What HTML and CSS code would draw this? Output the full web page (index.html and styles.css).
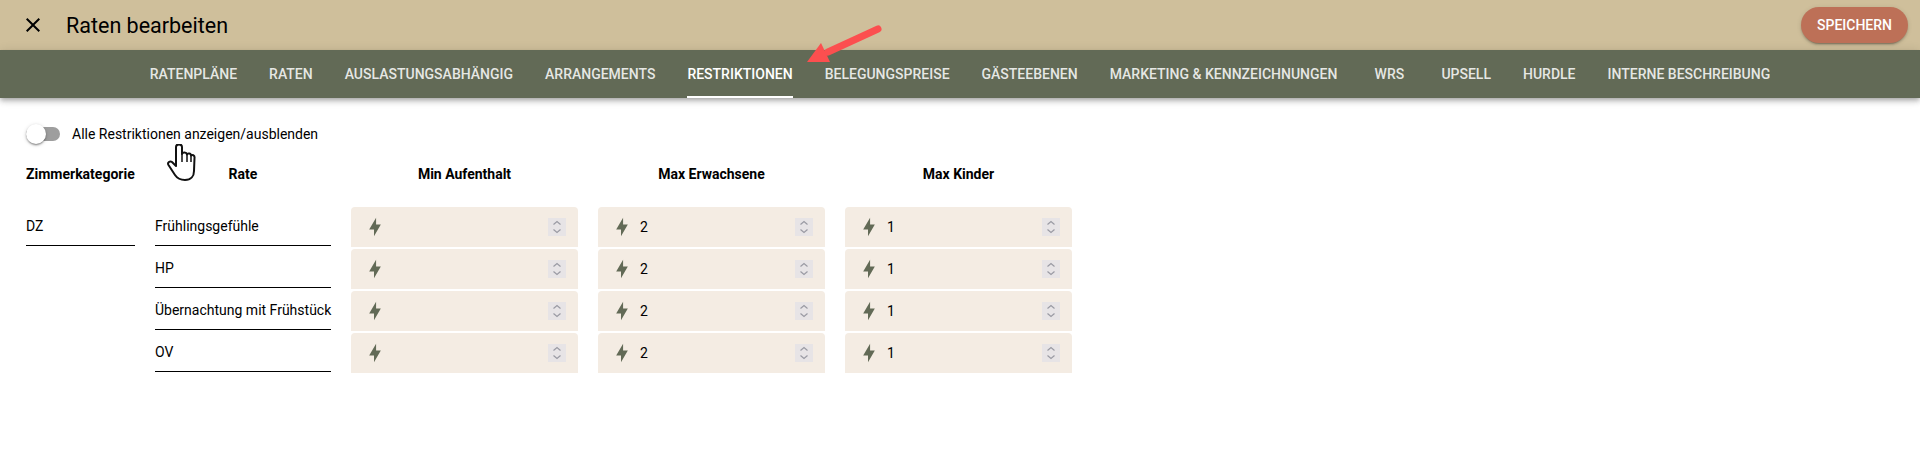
FILE: index.html
```html
<!DOCTYPE html>
<html lang="de">
<head>
<meta charset="utf-8">
<title>Raten bearbeiten</title>
<link rel="stylesheet" href="styles.css">
</head>
<body>
<header class="topbar">
  <svg class="close" viewBox="0 0 24 24"><path d="M19 6.41 17.59 5 12 10.59 6.41 5 5 6.41 10.59 12 5 17.59 6.41 19 12 13.41 17.59 19 19 17.59 13.41 12z"/></svg>
  <h1 class="title">Raten bearbeiten</h1>
  <button class="save">SPEICHERN</button>
</header>
<nav class="tabs">
  <a class="tab">Ratenpläne</a>
  <a class="tab">Raten</a>
  <a class="tab">Auslastungsabhängig</a>
  <a class="tab">Arrangements</a>
  <a class="tab active">Restriktionen</a>
  <a class="tab">Belegungspreise</a>
  <a class="tab">Gästeebenen</a>
  <a class="tab">Marketing &amp; Kennzeichnungen</a>
  <a class="tab">WRS</a>
  <a class="tab">Upsell</a>
  <a class="tab">Hurdle</a>
  <a class="tab">Interne Beschreibung</a>
</nav>
<main class="content">
  <div class="toggle-row">
    <span class="switch"><span class="knob"></span></span>
    <span class="toggle-label">Alle Restriktionen anzeigen/ausblenden</span>
  </div>
  <div class="grid">
    <div class="head head-left">Zimmerkategorie</div>
    <div class="head">Rate</div>
    <div class="head">Min Aufenthalt</div>
    <div class="head">Max Erwachsene</div>
    <div class="head">Max Kinder</div>

    <div class="name">DZ</div>
    <div class="name">Frühlingsgefühle</div>
    <div class="field"><svg class="bolt" viewBox="0 0 24 24"><path d="M10.800 15H5L13.300 1V9H19L10.800 23V15Z"/></svg><span class="val"></span><svg class="spin" viewBox="0 0 18 18"><path d="M5.5 6.5 9 3.5l3.500 3M5.500 11.500 9 14.500l3.500-3"/></svg></div>
    <div class="field"><svg class="bolt" viewBox="0 0 24 24"><path d="M10.800 15H5L13.300 1V9H19L10.800 23V15Z"/></svg><span class="val">2</span><svg class="spin" viewBox="0 0 18 18"><path d="M5.5 6.5 9 3.5l3.500 3M5.500 11.500 9 14.500l3.500-3"/></svg></div>
    <div class="field"><svg class="bolt" viewBox="0 0 24 24"><path d="M10.800 15H5L13.300 1V9H19L10.800 23V15Z"/></svg><span class="val">1</span><svg class="spin" viewBox="0 0 18 18"><path d="M5.5 6.5 9 3.5l3.500 3M5.500 11.500 9 14.500l3.500-3"/></svg></div>

    <div class="empty"></div>
    <div class="name">HP</div>
    <div class="field"><svg class="bolt" viewBox="0 0 24 24"><path d="M10.800 15H5L13.300 1V9H19L10.800 23V15Z"/></svg><span class="val"></span><svg class="spin" viewBox="0 0 18 18"><path d="M5.5 6.5 9 3.5l3.500 3M5.500 11.500 9 14.500l3.500-3"/></svg></div>
    <div class="field"><svg class="bolt" viewBox="0 0 24 24"><path d="M10.800 15H5L13.300 1V9H19L10.800 23V15Z"/></svg><span class="val">2</span><svg class="spin" viewBox="0 0 18 18"><path d="M5.5 6.5 9 3.5l3.500 3M5.500 11.500 9 14.500l3.500-3"/></svg></div>
    <div class="field"><svg class="bolt" viewBox="0 0 24 24"><path d="M10.800 15H5L13.300 1V9H19L10.800 23V15Z"/></svg><span class="val">1</span><svg class="spin" viewBox="0 0 18 18"><path d="M5.5 6.5 9 3.5l3.500 3M5.500 11.500 9 14.500l3.500-3"/></svg></div>

    <div class="empty"></div>
    <div class="name">Übernachtung mit Frühstück</div>
    <div class="field"><svg class="bolt" viewBox="0 0 24 24"><path d="M10.800 15H5L13.300 1V9H19L10.800 23V15Z"/></svg><span class="val"></span><svg class="spin" viewBox="0 0 18 18"><path d="M5.5 6.5 9 3.5l3.500 3M5.500 11.500 9 14.500l3.500-3"/></svg></div>
    <div class="field"><svg class="bolt" viewBox="0 0 24 24"><path d="M10.800 15H5L13.300 1V9H19L10.800 23V15Z"/></svg><span class="val">2</span><svg class="spin" viewBox="0 0 18 18"><path d="M5.5 6.5 9 3.5l3.500 3M5.500 11.500 9 14.500l3.500-3"/></svg></div>
    <div class="field"><svg class="bolt" viewBox="0 0 24 24"><path d="M10.800 15H5L13.300 1V9H19L10.800 23V15Z"/></svg><span class="val">1</span><svg class="spin" viewBox="0 0 18 18"><path d="M5.5 6.5 9 3.5l3.500 3M5.500 11.500 9 14.500l3.500-3"/></svg></div>

    <div class="empty"></div>
    <div class="name">OV</div>
    <div class="field"><svg class="bolt" viewBox="0 0 24 24"><path d="M10.800 15H5L13.300 1V9H19L10.800 23V15Z"/></svg><span class="val"></span><svg class="spin" viewBox="0 0 18 18"><path d="M5.5 6.5 9 3.5l3.500 3M5.500 11.500 9 14.500l3.500-3"/></svg></div>
    <div class="field"><svg class="bolt" viewBox="0 0 24 24"><path d="M10.800 15H5L13.300 1V9H19L10.800 23V15Z"/></svg><span class="val">2</span><svg class="spin" viewBox="0 0 18 18"><path d="M5.5 6.5 9 3.5l3.500 3M5.500 11.500 9 14.500l3.500-3"/></svg></div>
    <div class="field"><svg class="bolt" viewBox="0 0 24 24"><path d="M10.800 15H5L13.300 1V9H19L10.800 23V15Z"/></svg><span class="val">1</span><svg class="spin" viewBox="0 0 18 18"><path d="M5.5 6.5 9 3.5l3.500 3M5.500 11.500 9 14.500l3.500-3"/></svg></div>
  </div>
</main>
<svg class="arrow" viewBox="0 0 80 42"><path d="M72 5 22 28" stroke="#fc4f4f" stroke-width="7" stroke-linecap="round" fill="none"/><path d="M1 38 15 19 24 38Z" fill="#fc4f4f"/></svg>
<svg class="hand" viewBox="0 0 30 39"><path d="M9 22 9 3C9-.5 15-.5 15 3L15 10C15.500 8 19.500 8 20 10.500 20.500 9 24 9 24 11.500 25 10.500 28 11 27.500 14L27 27C27 32 24 36 18 36 13 36 10 34 8 31L1.500 21C0 18.500 3 16.500 5 18Z" fill="#fff" stroke="#111" stroke-width="2" stroke-linejoin="round"/><path d="M15 10v8M20 10.500V18M24 11.500V18" stroke="#111" stroke-width="1.500" fill="none"/></svg>
</body>
</html>
```
FILE: styles.css
```css
* { box-sizing: border-box; }
html, body { margin: 0; height: 100%; }
body { font-family: Roboto, "Liberation Sans", sans-serif; color: #000; background: #fff; overflow: hidden; }

.topbar { height: 50px; background: #cfbf9b; display: flex; align-items: center; padding: 0 12px 0 21px; }
.close { width: 24px; height: 24px; fill: #000; flex: none; }
.title { margin: 1px 0 0 21px; font-size: 21.500px; font-weight: 400; line-height: 24px; flex: 1; color: #000; }
.save { width: 107px; height: 36px; border: 0; border-radius: 18px; background: #bd7057; color: #fff; font: 500 14px Roboto, sans-serif; box-shadow: 0 3px 1px -2px rgba(0,0,0,.2), 0 2px 2px rgba(0,0,0,.14), 0 1px 5px rgba(0,0,0,.12); padding: 0; }

.tabs { height: 48px; background: #626a56; display: flex; justify-content: center; box-shadow: 0 2px 4px -1px rgba(0,0,0,.2), 0 4px 5px rgba(0,0,0,.14), 0 1px 10px rgba(0,0,0,.12); }
.tab { min-width: 72px; padding: 0 16px; display: flex; align-items: center; justify-content: center; font-size: 14px; font-weight: 500; text-transform: uppercase; color: rgba(255,255,255,.85); white-space: nowrap; position: relative; }
.tab.active { color: #fff; }
.tab.active::after { content: ""; position: absolute; left: 16px; right: 16px; bottom: 0; height: 2px; background: #fff; }

.content { padding: 26px 0 0 26px; }
.toggle-row { display: flex; align-items: center; height: 20px; }
.switch { width: 34px; height: 14px; border-radius: 7px; background: #9e9e9e; position: relative; flex: none; }
.knob { position: absolute; left: 0; top: -3px; width: 20px; height: 20px; border-radius: 50%; background: #fff; box-shadow: 0 2px 2px -1px rgba(0,0,0,.3), 0 1px 2px rgba(0,0,0,.2), 0 1px 4px rgba(0,0,0,.16); }
.toggle-label { margin-left: 12px; font-size: 14px; color: #000; }

.grid { display: grid; grid-template-columns: 109px 176px 227px 227px 227px; column-gap: 20px; row-gap: 2px; margin-top: 9px; }
.head { height: 41px; margin-bottom: 11px; display: flex; align-items: center; justify-content: center; font-size: 14px; font-weight: 700; }
.head-left { justify-content: flex-start; }
.name { height: 39px; border-bottom: 1px solid #000; font-size: 14px; white-space: nowrap; display: flex; align-items: center; color: #000; }
.field { height: 40px; background: #f4ece3; border-radius: 4px 4px 0 0; display: flex; align-items: center; padding: 0 12px 0 14px; }
.bolt { width: 20px; height: 20px; fill: #626a56; flex: none; }
.val { flex: 1; margin-left: 8px; font-size: 14px; color: #000; }
.spin { width: 18px; height: 18px; background: #e7e4e6; fill: none; stroke: #9a9aa3; stroke-width: 1.200; flex: none; }

.arrow { position: absolute; left: 806px; top: 24px; width: 80px; height: 42px; }
.hand { position: absolute; left: 167px; top: 144px; width: 30px; height: 39px; }
```
